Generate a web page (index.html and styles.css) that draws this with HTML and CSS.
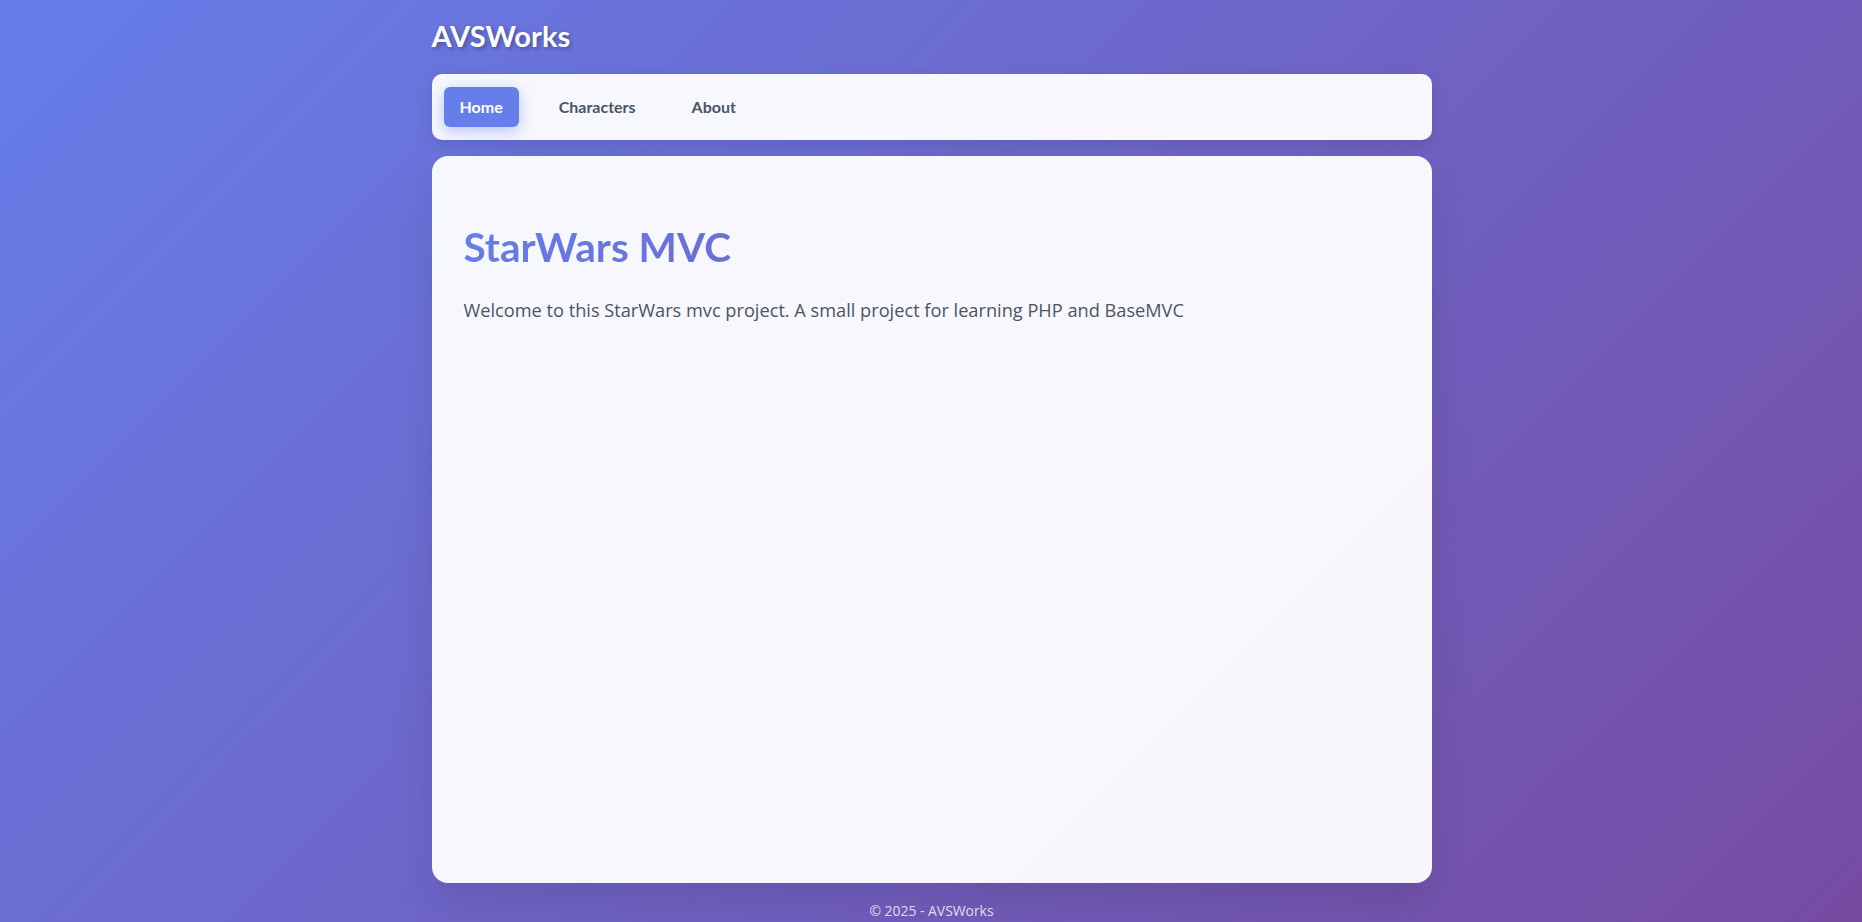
FILE: index.html
```html
<!DOCTYPE html>
<html lang="en">
<head>
<meta charset="utf-8">
<title>AVSWorks - StarWars MVC</title>
<link rel="stylesheet" href="styles.css">
</head>
<body>
<div class="page">
  <header class="site-header">
    <div class="brand">AVSWorks</div>
    <nav class="nav">
      <a class="nav-link active" href="#">Home</a>
      <a class="nav-link" href="#">Characters</a>
      <a class="nav-link" href="#">About</a>
    </nav>
  </header>
  <main class="card">
    <h1 class="title">StarWars MVC</h1>
    <p class="lead">Welcome to this StarWars mvc project. A small project for learning PHP and BaseMVC</p>
  </main>
  <footer class="footer">© 2025 - AVSWorks</footer>
</div>
</body>
</html>
```
FILE: styles.css
```css
html, body {
  margin: 0;
  padding: 0;
}
body {
  min-height: 100vh;
  background: linear-gradient(135deg, #667eea 0%, #764ba2 100%);
  font-family: "Open Sans", "Liberation Sans", sans-serif;
  color: #4a5568;
}
.page {
  width: 1000px;
  margin: 0 auto;
  padding: 19px 0 0 1px;
  display: flex;
  flex-direction: column;
}
.site-header {
  display: flex;
  flex-direction: column;
}
.brand {
  font-family: Lato, "Open Sans", sans-serif;
  font-weight: 700;
  font-size: 29.1px;
  line-height: 34px;
  color: #fff;
  text-shadow: 2px 2px 4px rgba(0, 0, 0, 0.3);
  margin-bottom: 21px;
}
.nav {
  display: flex;
  align-items: center;
  gap: 24px;
  padding: 12px;
  height: 66px;
  box-sizing: border-box;
  background: rgba(255, 255, 255, 0.95);
  border-radius: 10px;
  box-shadow: 0 5px 15px rgba(0, 0, 0, 0.1);
}
.nav-link {
  font-family: Lato, "Open Sans", sans-serif;
  font-weight: 700;
  font-size: 16px;
  line-height: 20px;
  padding: 10px 16px;
  border-radius: 6px;
  color: #4a5568;
  text-decoration: none;
}
.nav-link.active {
  background: #667eea;
  color: #fff;
  box-shadow: 0 4px 15px rgba(102, 126, 234, 0.45);
}
.card {
  margin-top: 16px;
  min-height: 727px;
  box-sizing: border-box;
  padding: 67px 32px 32px;
  background: rgba(255, 255, 255, 0.95);
  border-radius: 16px;
  box-shadow: 0 20px 40px rgba(0, 0, 0, 0.1);
}
.title {
  margin: 0 0 24px;
  font-family: Lato, "Open Sans", sans-serif;
  font-weight: 700;
  font-size: 40.6px;
  line-height: 1.2;
  background: linear-gradient(135deg, #667eea 0%, #764ba2 100%);
  -webkit-background-clip: text;
  background-clip: text;
  color: transparent;
}
.lead {
  margin: 0;
  font-size: 18.2px;
  line-height: 1.6;
  color: #4a5568;
}
.footer {
  text-align: center;
  padding: 18px 0 10px;
  font-size: 13.9px;
  color: rgba(255, 255, 255, 0.8);
}
```
